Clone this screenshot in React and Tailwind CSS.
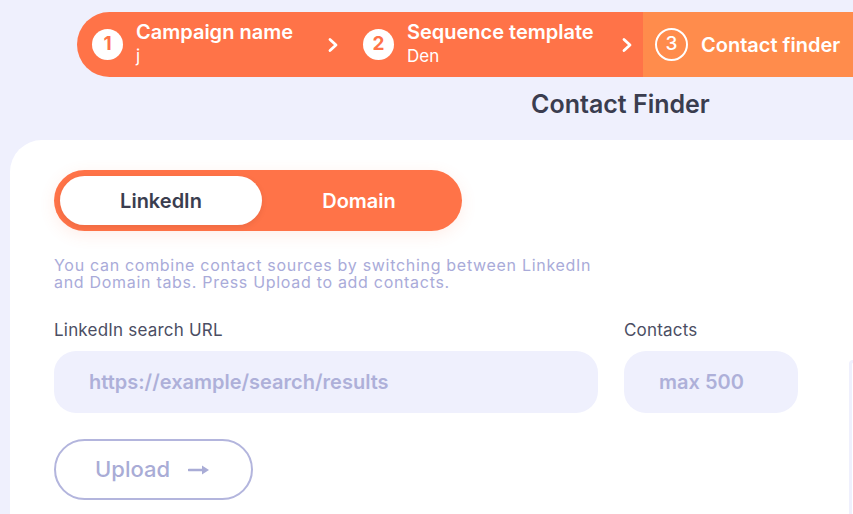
const Chevron = () => (
  <svg className="w-[14px] h-[16px]" viewBox="0 0 14 16" fill="none" stroke="white" strokeWidth={2.8} strokeLinecap="round" strokeLinejoin="round">
    <path d="M4 2.5l6 5.5-6 5.5" />
  </svg>
);

const ArrowLong = () => (
  <svg className="w-[22px] h-[12px]" viewBox="0 0 22 12" fill="none">
    <path d="M1 6h15" stroke="#a9acd6" strokeWidth={2.6} strokeLinecap="round" />
    <path d="M14 1.5L21 6l-7 4.5z" fill="#a9acd6" />
  </svg>
);

const App = () => {
  return (
    <div className="w-[853px] h-[514px] overflow-hidden bg-[#eff0fd] font-['Inter','Liberation_Sans',sans-serif] flex flex-col">
      {/* Stepper */}
      <div className="mt-[12px] ml-[77px] w-[800px] h-[65px] flex shrink-0 rounded-l-full overflow-hidden text-white">
        <div className="w-[566px] bg-[#ff7348] flex items-center pl-[15px]">
          <div className="w-[31px] h-[31px] rounded-full bg-white text-[#ff7348] flex items-center justify-center text-[19px] font-bold">1</div>
          <div className="ml-[13px] flex flex-col leading-[24px] mt-[-1px]">
            <span className="text-[20px] font-semibold">Campaign name</span>
            <span className="text-[17px]">j</span>
          </div>
          <div className="ml-[33px]"><Chevron /></div>
          <div className="ml-[23px] w-[31px] h-[31px] rounded-full bg-white text-[#ff7348] flex items-center justify-center text-[19px] font-bold">2</div>
          <div className="ml-[13px] flex flex-col leading-[24px] mt-[-1px]">
            <span className="text-[20px] font-semibold whitespace-nowrap">Sequence template</span>
            <span className="text-[17px]">Den</span>
          </div>
          <div className="ml-[26px]"><Chevron /></div>
        </div>
        <div className="flex-1 bg-[#ff8c4c] flex items-center pl-[12px]">
          <div className="w-[33px] h-[33px] rounded-full border-2 border-white flex items-center justify-center text-[19px] font-medium">3</div>
          <span className="ml-[13px] text-[20px] font-semibold whitespace-nowrap">Contact finder</span>
        </div>
      </div>

      <h1 className="mt-[12px] ml-[531px] text-[25px] leading-[30px] font-semibold text-[#3a3d4f] whitespace-nowrap">Contact Finder</h1>

      {/* Card */}
      <div className="mt-[21px] ml-[10px] flex-1 bg-white rounded-tl-[32px] pt-[30px] pl-[44px] flex">
        <div className="flex flex-col shrink-0">
          <div className="w-[408px] h-[61px] rounded-full bg-[#ff7348] p-[6px] flex items-center shadow-[0_4px_16px_rgba(255,115,72,0.12)]">
            <div className="w-[202px] h-[49px] rounded-full bg-white flex items-center justify-center text-[20px] font-semibold text-[#3a3d4f] shadow-[0_2px_6px_rgba(0,0,0,0.08)]">LinkedIn</div>
            <div className="flex-1 flex items-center justify-center text-[20px] font-semibold text-white">Domain</div>
          </div>

          <p className="mt-[26px] text-[16px] leading-[17px] tracking-[0.7px] text-[#a9abd9] w-[560px]">
            You can combine contact sources by switching between LinkedIn and Domain tabs. Press Upload to add contacts.
          </p>

          <div className="mt-[30px] flex gap-[26px]">
            <div className="flex flex-col">
              <label className="text-[17px] leading-[19px] tracking-[0.2px] text-[#4b4e63]">LinkedIn search URL</label>
              <div className="mt-[11px] w-[544px] h-[62px] rounded-[22px] bg-[#eff0fd] flex items-center pl-[35px] text-[20px] font-semibold text-[#aeb0d9]">https://example/search/results</div>
            </div>
            <div className="flex flex-col">
              <label className="text-[17px] leading-[19px] tracking-[0.2px] text-[#4b4e63]">Contacts</label>
              <div className="mt-[11px] w-[174px] h-[62px] rounded-[22px] bg-[#eff0fd] flex items-center pl-[35px] text-[20px] font-semibold text-[#aeb0d9]">max 500</div>
            </div>
          </div>

          <button className="mt-[26px] w-[199px] h-[61px] rounded-full border-2 border-[#b3b5dd] flex items-center pl-[39px] gap-[18px] text-[22px] font-medium text-[#a9acd6]">
            Upload <ArrowLong />
          </button>
        </div>
        <div className="ml-[51px] mt-[190px] w-[40px] flex-1 min-h-0 rounded-tl-[20px] border-l-[3px] border-t-[3px] border-[#eff0fd]"></div>
      </div>
    </div>
  );
};

export default App;
